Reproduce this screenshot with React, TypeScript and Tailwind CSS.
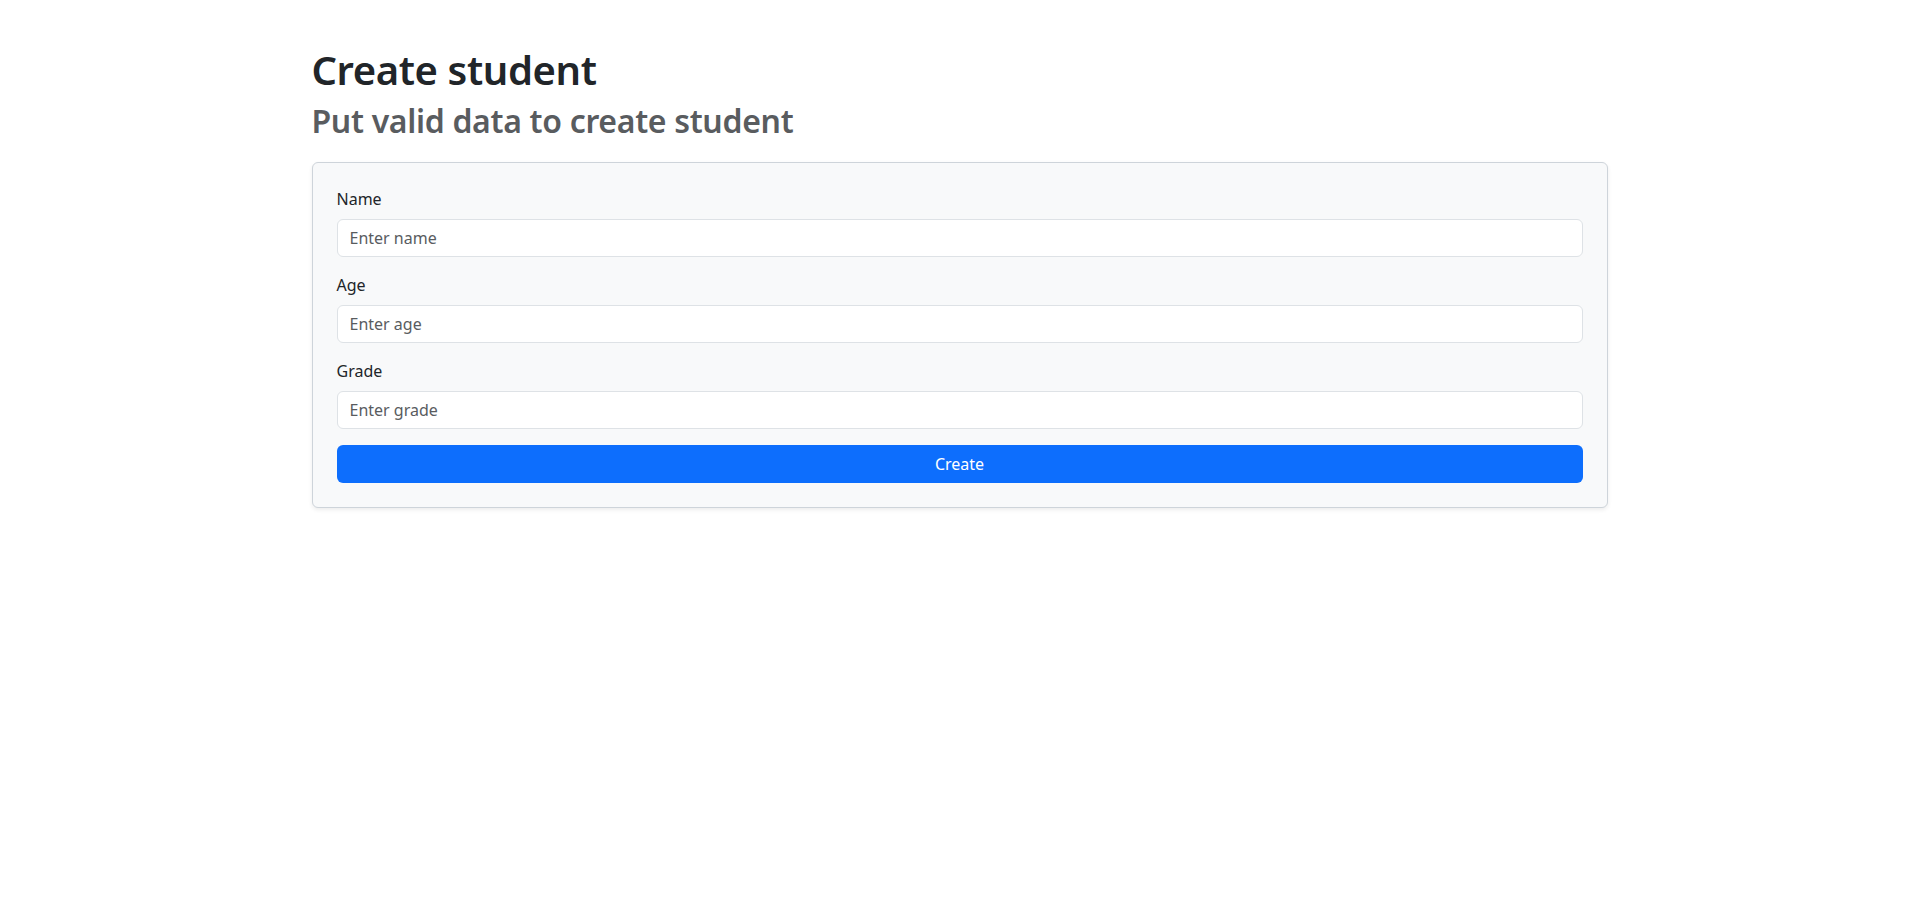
const fields = [
  { label: "Name", placeholder: "Enter name" },
  { label: "Age", placeholder: "Enter age" },
  { label: "Grade", placeholder: "Enter grade" },
];

export default function App() {
  return (
    <div className="min-h-screen bg-white text-[#212529] font-['Noto_Sans',sans-serif] text-base leading-6">
      <div className="max-w-[1320px] mx-auto px-3 pt-[46px]">
        <h1 className="text-[40px] leading-[1.2] font-semibold tracking-[-0.01em] mb-2">Create student</h1>
        <h2 className="text-[32px] leading-[1.2] font-semibold tracking-[-0.01em] text-[#595c5f] mb-[22px]">
          Put valid data to create student
        </h2>
        <form className="bg-[#f8f9fa] border border-[#ced4da] rounded-md shadow-[0_2px_4px_rgba(0,0,0,0.075)] p-6">
          {fields.map((f) => (
            <div key={f.label} className="mb-4">
              <label className="block mb-2">{f.label}</label>
              <input
                type="text"
                placeholder={f.placeholder}
                className="block w-full h-[38px] px-3 bg-white border border-[#dee2e6] rounded-md placeholder:text-[#595c5f] outline-none"
              />
            </div>
          ))}
          <button
            type="button"
            className="block w-full h-[38px] bg-[#0d6efd] text-white rounded-md"
          >
            Create
          </button>
        </form>
      </div>
    </div>
  );
}
